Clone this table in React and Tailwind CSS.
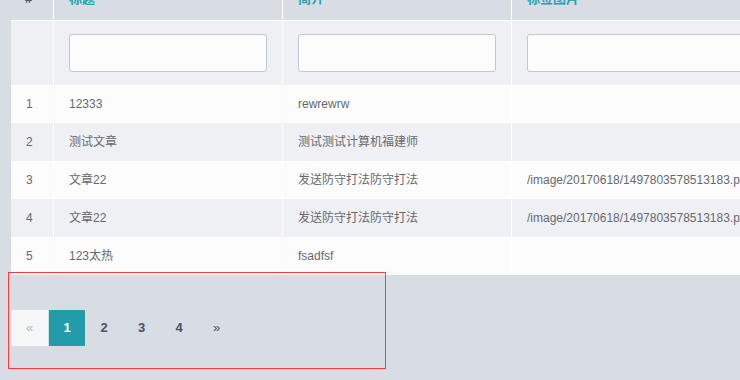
const rows = [
  { id: 1, title: '12333', intro: 'rewrewrw', img: '' },
  { id: 2, title: '测试文章', intro: '测试测试计算机福建师', img: '' },
  { id: 3, title: '文章22', intro: '发送防守打法防守打法', img: '/image/20170618/1497803578513183.png' },
  { id: 4, title: '文章22', intro: '发送防守打法防守打法', img: '/image/20170618/1497803578513183.png' },
  { id: 5, title: '123太热', intro: 'fsadfsf', img: '' },
];

const font = { fontFamily: '"Liberation Sans", Arial, "Noto Sans CJK SC", sans-serif' };

export default function App() {
  return (
    <div className="w-[740px] h-[380px] overflow-hidden bg-[#d8dce3]" style={font}>
      <div className="ml-[11px] w-[1000px]">
        {/* header, mostly scrolled out of view */}
        <div className="flex h-[20px] items-end text-[13px] leading-4 font-bold">
          <div className="w-[43px] shrink-0 h-full border-r border-white flex items-end pb-[13px] pl-[14px] text-[#4a5066]">#</div>
          <div className="w-[229px] shrink-0 h-full border-r border-white flex items-end pb-[13px] px-[15px] text-[#25a3b2]">标题</div>
          <div className="w-[229px] shrink-0 h-full border-r border-white flex items-end pb-[13px] px-[15px] text-[#25a3b2]">简介</div>
          <div className="w-[400px] shrink-0 h-full flex items-end pb-[13px] px-[15px] text-[#25a3b2]">标签图片</div>
        </div>

        {/* filter row */}
        <div className="flex h-[65px] border-t border-white bg-[#eff0f4]">
          <div className="w-[43px] shrink-0 border-r border-white" />
          <div className="w-[229px] shrink-0 border-r border-white px-[15px] pt-[13px]">
            <input className="w-full h-[38px] rounded-[3px] border border-[#c2c5d2] bg-[#fcfcfc] outline-none" />
          </div>
          <div className="w-[229px] shrink-0 border-r border-white px-[15px] pt-[13px]">
            <input className="w-full h-[38px] rounded-[3px] border border-[#c2c5d2] bg-[#fcfcfc] outline-none" />
          </div>
          <div className="w-[400px] shrink-0 px-[15px] pt-[13px]">
            <input className="w-[300px] h-[38px] rounded-[3px] border border-[#c2c5d2] bg-[#fcfcfc] outline-none" />
          </div>
        </div>

        {rows.map((r, i) => (
          <div
            key={r.id}
            className={`flex h-[38px] text-[12px] text-[#676a6c] ${i % 2 === 0 ? 'bg-[#fcfcfc]' : 'bg-[#eff0f4]'}`}
          >
            <div className="w-[43px] shrink-0 border-r border-white flex items-center pl-[15px]">{r.id}</div>
            <div className="w-[229px] shrink-0 border-r border-white flex items-center px-[15px]">{r.title}</div>
            <div className="w-[229px] shrink-0 border-r border-white flex items-center px-[15px]">{r.intro}</div>
            <div className="w-[400px] shrink-0 flex items-center px-[15px] whitespace-nowrap">{r.img}</div>
          </div>
        ))}
      </div>

      {/* pagination, with highlight box */}
      <div className="relative ml-[8px] -mt-[3px] w-[378px] h-[97px] border border-[#ff3b3b] pt-[37px] pl-[2px]">
        <div className="flex h-[36px] text-[13px] font-bold">
          <div className="w-[37px] flex items-center justify-center bg-[#f5f6f8] rounded-l-[3px] text-[#b4b8c2] font-normal">«</div>
          <div className="w-[36px] ml-px flex items-center justify-center bg-[#239ca9] text-white">1</div>
          <div className="w-[38px] flex items-center justify-center text-[#4a5066]">2</div>
          <div className="w-[37px] flex items-center justify-center text-[#4a5066]">3</div>
          <div className="w-[38px] flex items-center justify-center text-[#4a5066]">4</div>
          <div className="w-[37px] flex items-center justify-center text-[#4a5066] font-normal">»</div>
        </div>
      </div>
    </div>
  );
}
